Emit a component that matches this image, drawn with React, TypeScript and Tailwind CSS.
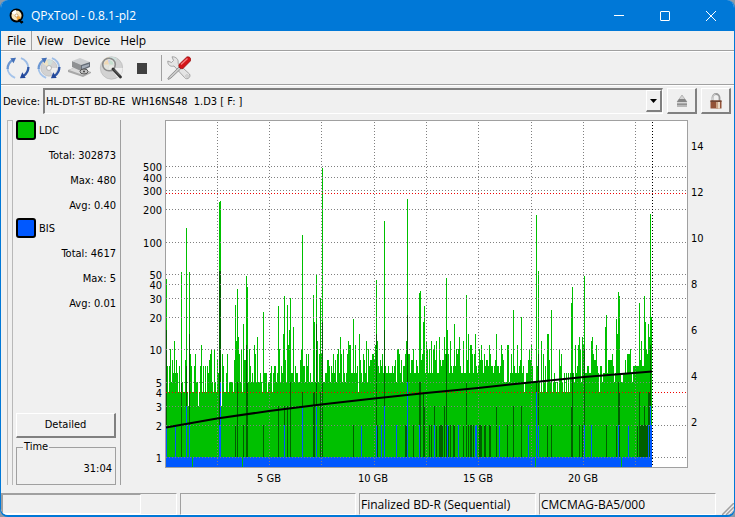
import React from "react";

// LDC errors, one value per sampled block
const ldc = [
  45, 7, 4, 7, 10, 5, 8, 6, 12, 6, 8, 6, 4, 7, 4, 52, 5, 4, 4, 8, 135, 4, 3, 52, 9, 7, 4, 4, 7, 9,
  5, 5, 3, 4, 7, 11, 4, 7, 4, 7, 4, 7, 6, 8, 9, 10, 5, 4, 10, 5, 4, 8, 6, 235, 240, 3, 9, 7, 4, 4,
  6, 9, 4, 5, 5, 5, 5, 4, 8, 26, 12, 36, 13, 9, 5, 10, 4, 17, 8, 8, 48, 38, 5, 10, 7, 5, 6, 5, 11, 9,
  5, 13, 5, 5, 6, 5, 4, 22, 6, 6, 6, 4, 5, 5, 6, 7, 4, 6, 7, 7, 5, 6, 25, 10, 5, 7, 6, 14, 31, 8,
  5, 26, 11, 15, 30, 6, 6, 16, 5, 7, 6, 6, 5, 5, 8, 10, 116, 7, 7, 5, 9, 7, 9, 5, 6, 5, 5, 32, 18, 5,
  49, 12, 5, 9, 30, 9, 480, 5, 5, 6, 6, 8, 8, 7, 5, 7, 6, 9, 6, 8, 5, 9, 10, 6, 13, 9, 5, 10, 6, 5,
  6, 9, 12, 11, 11, 6, 6, 19, 6, 11, 6, 7, 4, 14, 8, 6, 5, 9, 8, 6, 12, 5, 10, 7, 8, 8, 9, 9, 8, 11,
  44, 12, 7, 6, 8, 7, 9, 6, 154, 7, 6, 6, 7, 6, 6, 6, 7, 6, 7, 8, 5, 10, 10, 9, 6, 8, 5, 7, 7, 9,
  12, 246, 9, 9, 6, 8, 8, 10, 6, 6, 8, 7, 6, 33, 35, 8, 9, 18, 25, 6, 12, 10, 6, 10, 6, 12, 6, 10, 11, 8,
  12, 6, 6, 13, 8, 7, 8, 8, 13, 9, 46, 15, 9, 6, 12, 7, 6, 7, 17, 7, 10, 9, 10, 13, 7, 6, 6, 12, 6, 6,
  32, 8, 14, 6, 11, 11, 9, 6, 9, 14, 7, 6, 7, 10, 8, 11, 8, 6, 9, 7, 8, 8, 7, 11, 9, 7, 7, 6, 7, 8,
  14, 7, 7, 6, 7, 11, 9, 8, 5, 5, 5, 11, 11, 5, 6, 9, 6, 23, 7, 6, 6, 11, 6, 7, 8, 20, 6, 7, 4, 5,
  6, 6, 8, 10, 8, 11, 7, 5, 5, 5, 178, 7, 53, 5, 4, 12, 4, 9, 5, 7, 4, 14, 14, 8, 5, 23, 4, 5, 6, 5,
  4, 5, 4, 10, 7, 9, 5, 4, 6, 4, 6, 4, 6, 4, 6, 27, 38, 6, 5, 11, 6, 7, 11, 13, 10, 5, 13, 11, 48, 6,
  6, 7, 7, 6, 6, 12, 13, 9, 8, 8, 11, 7, 6, 4, 7, 7, 5, 6, 6, 16, 21, 6, 8, 8, 8, 8, 9, 7, 5, 6,
  19, 14, 34, 31, 6, 5, 5, 6, 6, 8, 6, 9, 9, 9, 10, 6, 5, 7, 7, 7, 7, 7, 7, 27, 8, 12, 7, 7, 31, 18,
  10, 9, 17, 13, 180, 20,
];

// [block, value]
const bisMax = [
  [0, 15], [15, 5], [20, 7], [23, 14], [53, 53], [54, 53], [69, 2], [71, 5], [77, 2], [80, 11], [81, 5],
  [97, 2], [112, 3], [118, 3], [121, 3], [124, 5], [136, 4], [147, 4], [148, 4], [150, 17], [154, 4],
  [156, 18], [187, 2], [210, 14], [211, 2], [218, 15], [239, 2], [240, 2], [241, 21], [247, 2], [253, 5],
  [254, 5], [257, 4], [258, 3], [263, 2], [265, 2], [268, 3], [270, 2], [273, 2], [274, 2], [275, 2],
  [276, 2], [278, 3], [280, 9], [282, 2], [284, 2], [287, 2], [288, 2], [297, 2], [300, 5], [302, 2],
  [304, 2], [305, 2], [307, 2], [313, 2], [314, 2], [315, 2], [318, 2], [319, 2], [323, 2], [324, 2],
  [330, 3], [341, 2], [347, 3], [355, 3], [370, 5], [372, 9], [381, 2], [385, 2], [405, 3], [406, 6],
  [413, 2], [416, 2], [418, 10], [440, 2], [450, 2], [452, 5], [453, 4], [471, 2], [473, 4], [474, 2],
  [475, 2], [476, 2], [477, 2], [478, 3], [479, 2], [480, 2], [481, 2], [482, 4], [483, 4], [484, 11],
];

const bis = [
  [0, 2], [9, 2], [20, 3], [23, 2], [53, 2], [54, 5], [118, 2], [136, 3], [150, 3], [195, 2], [210, 2],
  [215, 2], [218, 3], [230, 2], [241, 5], [253, 2], [268, 2], [281, 2], [292, 2], [309, 2], [310, 2],
  [333, 2], [362, 2], [370, 4], [372, 2], [418, 2], [425, 2], [452, 2], [462, 2], [482, 2], [484, 3],
  [485, 2],
];

const bisGaps = [26, 76, 369, 455];
const gridX = [51, 103, 155, 208, 260, 312, 365, 417, 469];
const gridY = [1, 2, 3, 5, 10, 20, 30, 40, 50, 100, 200, 300, 400, 500];
const errorLabels = [1, 2, 3, 4, 5, 10, 20, 30, 40, 50, 100, 200, 300, 400, 500];
const speedLabels = [2, 4, 6, 8, 10, 12, 14];
const sizeLabels = [
  { x: 103, text: "5 GB" },
  { x: 207, text: "10 GB" },
  { x: 312, text: "15 GB" },
  { x: 417, text: "20 GB" },
];

const PLOT_W = 521;
const PLOT_H = 346;

const yOf = (value: number) => Math.round(336 - 107.7 * Math.log10(value));

const bars = (items: number[][], bottom: number) =>
  items.map(([x, v]) => `M${x} ${bottom}V${yOf(v)}h1V${bottom}z`).join("");

const Chart = () => {
  return (
    <svg
      viewBox="-42 -1 610 368"
      className="block w-full font-['DejaVu_Sans_Condensed','DejaVu_Sans',sans-serif] text-[11px]"
      role="img"
      aria-label="LDC and BIS errors"
    >
      <rect x={-1} y={-1} width={PLOT_W + 2} height={PLOT_H + 2} fill="#a0a0a0" />
      <rect width={PLOT_W} height={PLOT_H} fill="#fff" />
      <g shapeRendering="crispEdges">
        <path d={bars(ldc.map((v, i) => [i, v]), PLOT_H)} fill="#00c000" />
        <path d={bars(bisMax, 336)} fill="#006000" />
        <path d={bars(bis, 336)} fill="#0058ff" />
        <rect y={336} width={486} height={10} fill="#0058ff" />
        {bisGaps.map((x) => (
          <rect key={x} x={x} y={336} width={1} height={10} fill="#00c000" />
        ))}
        <g stroke="#808080" strokeDasharray="1 2">
          {gridX.map((x) => (
            <path key={x} d={`M${x}.5 1V${PLOT_H}`} />
          ))}
          {gridY.map((v) => (
            <path key={v} d={`M0 ${yOf(v)}.5H${PLOT_W}`} />
          ))}
        </g>
        <path d="M0 72.5H521M0 271.5H521" stroke="#f00000" strokeDasharray="1 2" />
        <path d="M486.5 1V346" stroke="#000" strokeDasharray="1 2" />
      </g>
      <path
        d="M0 306.500L51 297.500L103 290L155 283.500L208 277.500L260 272L312 267L344 263.500L418 256L486 250.500"
        fill="none"
        stroke="#000"
        strokeWidth={2}
      />
      <g fill="#000" textAnchor="end">
        {errorLabels.map((v) => (
          <text key={v} x={-4} y={yOf(v) + 5}>
            {v}
          </text>
        ))}
      </g>
      {speedLabels.map((v) => (
        <text key={v} x={525} y={Math.round(350 - v * 23) + 1}>
          {v}
        </text>
      ))}
      <g textAnchor="middle">
        {sizeLabels.map((label) => (
          <text key={label.text} x={label.x} y={361}>
            {label.text}
          </text>
        ))}
      </g>
    </svg>
  );
};

const AppIcon = () => (
  <svg viewBox="0 0 16 16" className="h-4 w-4">
    <circle cx="7.500" cy="7.500" r="6" fill="#f8e6bc" stroke="#000" strokeWidth="1.800" />
    <path d="M7.500 7.500L2.500 5A5.500 5.500 0 0 1 7 2z" fill="#fff" />
    <path d="M7.500 7.500L12 9A5 5 0 0 1 8 12.500z" fill="#f2a63a" />
    <circle cx="7.500" cy="7.500" r="1.500" fill="#fff" stroke="#b98a50" strokeWidth=".7" />
    <path d="M9.500 11.500l3 3 1.500-1" stroke="#000" strokeWidth="1.800" fill="none" />
  </svg>
);

const Arrows = () => (
  <g fill="none">
    <path d="M9.500 22.300C5 20.500 1.500 16.500 1.700 12" stroke="#a4c3ea" strokeWidth="2" />
    <path d="M1.700 13C1.700 9 3.500 6 6.500 4" stroke="#6b97d3" strokeWidth="2.400" />
    <path d="M4.500 1.800L10.500 1.300L7.800 7z" fill="#4470b8" />
    <path d="M15.500 1.700C20 3 23.300 7.500 23.300 12" stroke="#9dbde6" strokeWidth="2" />
    <path d="M23.300 11C23.300 15 21.500 18 18.500 20" stroke="#2f56a6" strokeWidth="2.400" />
    <path d="M20.500 22.300L14.500 22.700L17 16.500z" fill="#23489a" />
  </g>
);

const Disc = ({ cx, cy, r }: any) => (
  <g>
    <circle cx={cx} cy={cy} r={r} fill="#d2d2d2" stroke="#b4b4b4" strokeWidth=".6" />
    <path d={`M${cx} ${cy}L${cx - r * 0.8} ${cy - r * 0.6}A${r} ${r} 0 0 1 ${cx - r * 0.2} ${cy - r}z`} fill="#efe3c4" />
    <path d={`M${cx} ${cy}L${cx - r * 0.2} ${cy - r}A${r} ${r} 0 0 1 ${cx + r * 0.5} ${cy - r * 0.85}z`} fill="#cfe0dc" />
    <path d={`M${cx} ${cy}L${cx + r} ${cy}A${r} ${r} 0 0 1 ${cx + r * 0.5} ${cy + r * 0.85}z`} fill="#eee" />
    <circle cx={cx} cy={cy} r={r * 0.3} fill="#fafafa" stroke="#999" strokeWidth=".7" />
  </g>
);

const RefreshIcon = () => (
  <svg viewBox="0 0 25 24" className="h-6 w-6">
    <Arrows />
  </svg>
);

const DiscRefreshIcon = () => (
  <svg viewBox="0 0 25 24" className="h-6 w-6">
    <Disc cx={12.5} cy={12} r={8.5} />
    <Arrows />
  </svg>
);

const DriveIcon = () => (
  <svg viewBox="0 0 24 24" className="h-6 w-6">
    <path d="M0 14l8-3 15 5v1l-8 4L0 16z" fill="#a8a8a8" />
    <path d="M1 14l7-3 14 5-7 3z" fill="#dadada" />
    <path d="M4 5l9 3v7l-9-4z" fill="#8f9193" />
    <path d="M4 5l8-3 10 4-9 3z" fill="#cdcfd1" />
    <path d="M13 9l9-3v5l-9 4z" fill="#656c76" />
    <path d="M14 10l7-2v2l-7 3z" fill="#a5adb8" />
    <ellipse cx="16" cy="15.500" rx="4" ry="2.500" fill="#c4c4c4" stroke="#555" />
    <circle cx="16" cy="15.500" r="1" fill="#444" />
  </svg>
);

const ScanIcon = () => (
  <svg viewBox="0 0 24 24" className="h-6 w-6">
    <Disc cx={12.5} cy={12} r={11.2} />
    <circle cx="10" cy="8.500" r="6.300" fill="#e6e8e2" fillOpacity=".85" stroke="#8c8c8c" strokeWidth="1.600" />
    <path d="M5 8.500a5 5 0 0 1 4-4.500l1 4.500z" fill="#f0d8b4" />
    <path d="M10 4a5 5 0 0 1 4.500 4.500H10z" fill="#c5e0cf" />
    <path d="M9 4h2l-1 4z" fill="#c6c9ee" />
    <path d="M14 13l7.500 8" stroke="#333" strokeWidth="2.800" strokeLinecap="round" />
    <path d="M15 13.500l6 6" stroke="#888" strokeWidth=".8" />
  </svg>
);

const ToolsIcon = () => (
  <svg viewBox="0 0 24 24" className="h-6 w-6">
    <path
      d="M5 .8L6.500 4.500 4.500 6.500.8 5C.5 9 3.500 11 7 10L17.500 21.500c2 3 7 0 5-3.500L11 7.500C12 3.500 9 .5 5 .8z"
      fill="#e4e4e4"
      stroke="#939393"
      strokeWidth=".8"
    />
    <circle cx="20" cy="20" r="1.200" fill="#fff" stroke="#999" strokeWidth=".6" />
    <path d="M12 11l1.800 1.800L4 22l-2.500 1.500L.8 23l1.500-2.500z" fill="#cacaca" stroke="#777" strokeWidth=".7" />
    <path d="M12 8.500L19.500 1.200C22-.2 25 2.500 23.400 5L16 12.500C13.500 13.500 11 11 12 8.500z" fill="#d41418" stroke="#8e0b0b" strokeWidth=".7" />
    <path d="M14 8.500L20.500 2.500" stroke="#f58080" strokeWidth="1.300" />
  </svg>
);

const EjectIcon = () => (
  <svg viewBox="0 0 12 14" className="h-[14px] w-3">
    <path d="M6 1l5 7H1z" fill="#d4d4d4" stroke="#a4a4a4" strokeWidth=".7" />
    <path d="M3 5h6l2 3H1z" fill="#858585" />
    <rect x="1" y="9.500" width="10" height="3.500" fill="#b8b8b8" />
    <rect x="1" y="9.500" width="10" height="1.200" fill="#808080" />
  </svg>
);

const LockIcon = () => (
  <svg viewBox="0 0 12 16" className="h-4 w-3">
    <path d="M2.500 8V4.500a3.500 3.500 0 0 1 7 0V8" fill="none" stroke="#999" strokeWidth="1.800" />
    <path d="M2.500 7V4.500a3.500 3.500 0 0 1 3-3.300" fill="none" stroke="#ddd" strokeWidth=".8" />
    <rect x=".5" y="7.500" width="11" height="8" fill="#945338" />
    <rect x=".5" y="7.500" width="11" height="1.500" fill="#6f4433" />
    <rect x="6" y="9" width="4" height="6.500" fill="#c9a183" />
    <rect x="8" y="9" width="2" height="6.500" fill="#ead8c6" />
  </svg>
);

const tools = [
  { label: "Rescan bus", icon: <RefreshIcon /> },
  { label: "Update device", icon: <DiscRefreshIcon /> },
  { label: "Drive info", icon: <DriveIcon /> },
  { label: "Start scan", icon: <ScanIcon /> },
  { label: "Stop", icon: <span className="h-[11px] w-[10px] bg-[#404040]" /> },
];

const raised =
  "flex items-center justify-center border-t border-l border-r-2 border-b-2 border-t-white border-l-white border-r-[#808080] border-b-[#808080] bg-[#f0f0f0]";
const sunken = "h-[22px] min-w-0 flex-1 border border-t-[#a0a0a0] border-l-[#a0a0a0] border-r-white border-b-white";

const Stats = ({ name, color, total, max, avg }: any) => {
  return (
    <div>
      <div className="mb-[3px] flex h-5 items-center gap-[3px]">
        <button aria-label={name} className={`h-5 w-5 rounded-[3px] border-2 border-black ${color}`} />
        <span className="pt-[2px]">{name}</span>
      </div>
      <div className="text-right leading-[25px]">
        <p>Total: {total}</p>
        <p>Max: {max}</p>
        <p>Avg: {avg}</p>
      </div>
    </div>
  );
};

const App = () => {
  return (
    <div className="min-h-screen bg-[#8c9aa8]">
      <div className="flex min-h-screen flex-col overflow-hidden rounded-lg border-x border-b-2 border-[#0078d7] bg-[#f0f0f0] font-['DejaVu_Sans_Condensed','DejaVu_Sans',sans-serif] text-[11px] text-black">
        <header className="flex h-[31px] items-center bg-[#0078d7] pl-2 font-['Open_Sans',sans-serif] text-xs text-white">
          <AppIcon />
          <h1 className="ml-[6px] flex-1">QPxTool - 0.8.1-pl2</h1>
          <button aria-label="Minimize" className="flex h-full w-[46px] items-center justify-center">
            <span className="h-px w-[10px] bg-white" />
          </button>
          <button aria-label="Maximize" className="flex h-full w-[46px] items-center justify-center">
            <span className="h-[10px] w-[10px] rounded-[1px] border border-white" />
          </button>
          <button aria-label="Close" className="flex h-full w-[46px] items-center justify-center">
            <svg viewBox="0 0 10 10" className="h-[10px] w-[10px]">
              <path d="M0 0L10 10M10 0L0 10" stroke="#fff" />
            </svg>
          </button>
        </header>

        <nav className="flex h-5 border-b border-[#a0a0a0] pl-px font-['Open_Sans',sans-serif] text-xs leading-[19px]">
          <button className="border-r border-[#a0a0a0] px-[5px]">File</button>
          <button className="px-[5px]">View</button>
          <button className="px-[5px]">Device</button>
          <button className="px-[5px]">Help</button>
        </nav>

        <div className="flex h-[34px] items-center border-t border-b border-t-white border-b-[#a0a0a0] pl-[5px]">
          {tools.map((tool) => (
            <button key={tool.label} aria-label={tool.label} className="mr-[7px] flex h-6 w-6 items-center justify-center">
              {tool.icon}
            </button>
          ))}
          <span className="mr-[5px] h-[26px] w-px bg-[#a0a0a0]" />
          <button aria-label="Preferences">
            <ToolsIcon />
          </button>
        </div>

        <div className="flex items-center gap-1 border-t border-white pt-[2px] pr-[3px] pl-[2px]">
          <label htmlFor="device" className="w-9 pt-[2px] whitespace-nowrap">
            Device:
          </label>
          <div className="relative flex-1">
            <select
              id="device"
              className="block h-[26px] w-full appearance-none border-t-2 border-l-2 border-r border-b border-t-[#808080] border-l-[#808080] border-r-white border-b-white bg-[#f0f0f0] pt-[2px] pl-px"
            >
              <option>{"HL-DT-ST BD-RE \u00a0WH16NS48 \u00a01.D3 [ F: ]"}</option>
            </select>
            <span className={`${raised} pointer-events-none absolute top-[2px] right-[1px] bottom-[2px] w-4`}>
              <svg viewBox="0 0 7 4" className="h-1 w-[7px]">
                <path d="M0 0h7L3.500 4z" />
              </svg>
            </span>
          </div>
          <button aria-label="Eject" className={`${raised} h-[26px] w-[30px]`}>
            <EjectIcon />
          </button>
          <button aria-label="Lock" className={`${raised} h-[26px] w-[30px]`}>
            <LockIcon />
          </button>
        </div>

        <main className="flex flex-1 gap-[3px] pt-[6px] pl-[6px]">
          <div className="mb-[3px] w-[6px] border-x border-t border-[#b8b8b8]" />
          <aside className="mb-[3px] flex w-[105px] flex-col border-r border-[#a0a0a0] pr-[4px]">
            <Stats name="LDC" color="bg-[#00c000]" total="302873" max="480" avg="0.40" />
            <Stats name="BIS" color="bg-[#0058ff]" total="4617" max="5" avg="0.01" />
            <button className={`${raised} mt-auto h-[25px]`}>Detailed</button>
            <fieldset className="mt-[2px] h-[45px] border border-[#a0a0a0] px-[3px]">
              <legend className="ml-[3px] px-[1px] leading-[14px]">Time</legend>
              <p className="mt-[8px] text-right leading-[14px]">31:04</p>
            </fieldset>
          </aside>
          <div className="min-w-0 flex-1">
            <Chart />
          </div>
        </main>

        <footer className="relative mt-[5px] flex gap-[3px] pr-[18px] font-['Open_Sans',sans-serif] text-xs leading-[22px] whitespace-nowrap">
          <div className={sunken}>
            <div className="h-full w-4/5 border border-t-[#a0a0a0] border-l-[#a0a0a0] border-r-white border-b-white" />
          </div>
          <div className={sunken} />
          <div className={`${sunken} pl-px`}>Finalized BD-R (Sequential)</div>
          <div className={`${sunken} pl-px`}>CMCMAG-BA5/000</div>
          <svg viewBox="0 0 12 12" className="absolute right-0 bottom-0 h-3 w-3">
            <path d="M0 12L12 0M4 12L12 4M8 12L12 8" stroke="#a0a0a0" strokeWidth="1.500" />
          </svg>
        </footer>
      </div>
    </div>
  );
};

export default App;
